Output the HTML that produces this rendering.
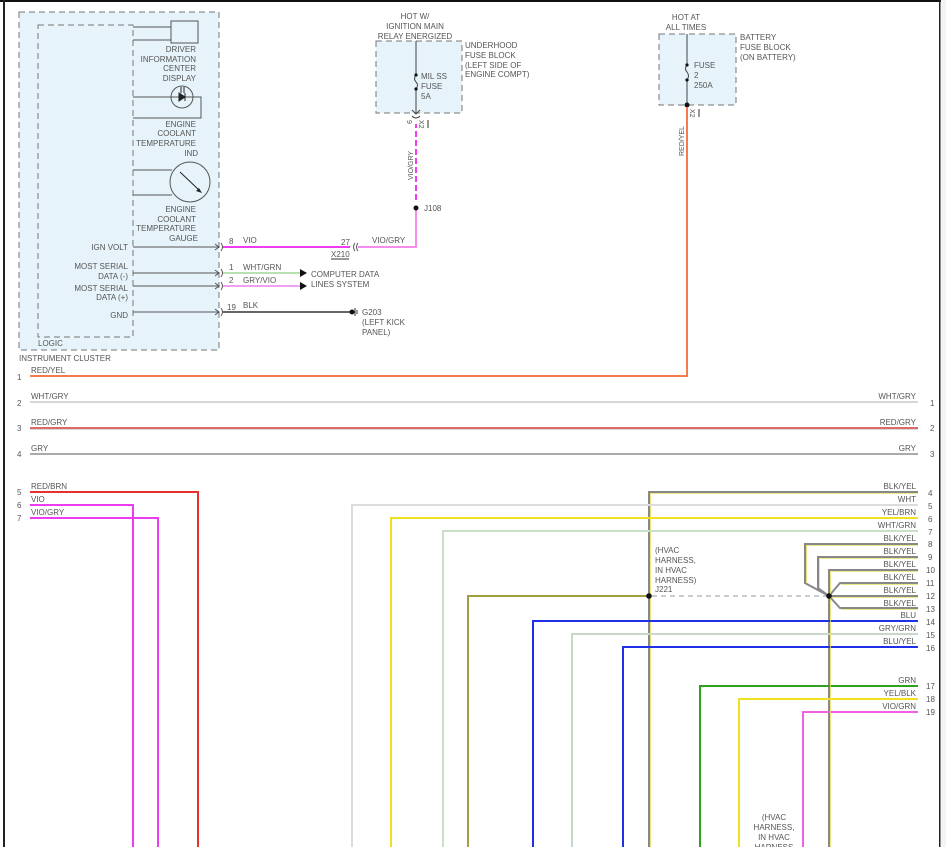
<!DOCTYPE html>
<html><head><meta charset="utf-8"><style>
html,body{margin:0;padding:0;background:#fff;width:946px;height:847px;overflow:hidden}
svg{display:block}
text{font-family:"Liberation Sans",sans-serif;font-size:8px;fill:#555}
.r{text-anchor:end}.m{text-anchor:middle}
</style></head><body>
<svg width="946" height="847" viewBox="0 0 946 847" xmlns="http://www.w3.org/2000/svg">
<rect x="0" y="0" width="946" height="2" fill="#111"/>
<rect x="3" y="0" width="2" height="847" fill="#222"/>
<rect x="939" y="0" width="1.5" height="847" fill="#222"/>
<rect x="941" y="0" width="5" height="847" fill="#f4f4f4"/>

<!-- instrument cluster -->
<rect x="19" y="12" width="200" height="338" fill="#e6f3fa" stroke="#777" stroke-dasharray="6,4"/>
<rect x="38" y="25" width="95" height="312" fill="none" stroke="#777" stroke-dasharray="6,4"/>
<rect x="171" y="21" width="27" height="22" fill="#e6f3fa" stroke="#555"/>
<path d="M133 27H171M133 40H171" stroke="#555" fill="none"/>
<text class="r" x="196" y="52">DRIVER</text><text class="r" x="196" y="62">INFORMATION</text><text class="r" x="196" y="71">CENTER</text><text class="r" x="196" y="81">DISPLAY</text>
<circle cx="182" cy="97" r="11" fill="none" stroke="#555"/>
<path d="M133 97H201V118H133" fill="none" stroke="#555"/>
<path d="M179 93L185 97L179 101ZM185 93V101M181 87V93M184 87V93" stroke="#222" fill="#222" stroke-width="1"/>
<text class="r" x="196" y="127">ENGINE</text><text class="r" x="196" y="136">COOLANT</text><text class="r" x="196" y="146">TEMPERATURE</text><text class="r" x="198" y="156">IND</text>
<circle cx="190" cy="182" r="20" fill="none" stroke="#555"/>
<path d="M133 170H172M133 195H172" stroke="#555" fill="none"/>
<path d="M180 172L200 191" stroke="#222"/><path d="M202 193L196 191L199 188Z" fill="#222"/>
<text class="r" x="196" y="212">ENGINE</text><text class="r" x="196" y="222">COOLANT</text><text class="r" x="196" y="231">TEMPERATURE</text><text class="r" x="198" y="241">GAUGE</text>
<text class="r" x="128" y="250">IGN VOLT</text>
<text class="r" x="128" y="269">MOST SERIAL</text><text class="r" x="128" y="279">DATA (-)</text>
<text class="r" x="128" y="291">MOST SERIAL</text><text class="r" x="128" y="300">DATA (+)</text>
<text class="r" x="128" y="318">GND</text>
<path d="M133 247H219M133 273H219M133 286H219M133 312H219" stroke="#555"/>
<path d="M215 244L219 247L215 250M215 270L219 273L215 276M215 283L219 286L215 289M215 309L219 312L215 315" stroke="#555" fill="none"/>
<path d="M221 243Q224 247 221 251M221 269Q224 273 221 277M221 282Q224 286 221 290M221 308Q224 312 221 316" stroke="#555" fill="none"/>
<text x="38" y="346">LOGIC</text>
<text x="19" y="361">INSTRUMENT CLUSTER</text>

<!-- wires out of cluster -->
<path d="M223 247H350" stroke="#f03cf0" stroke-width="2"/>
<path d="M358 247H416V208" stroke="#f58cf0" stroke-width="2" fill="none"/>
<path d="M416 200V124" stroke="#f03cf0" stroke-width="2" stroke-dasharray="6,3"/>
<circle cx="416" cy="208" r="2.5" fill="#111"/>
<text x="424" y="211">J108</text>
<path d="M355 243Q352 247 355 251M358 243Q355 247 358 251" stroke="#555" fill="none"/>
<text x="229" y="244">8</text><text x="243" y="243">VIO</text>
<text x="341" y="245">27</text><text x="331" y="257">X210</text><path d="M331 259H349" stroke="#333"/>
<text x="372" y="243">VIO/GRY</text>
<path d="M223 273H300" stroke="#b8e0b0" stroke-width="2"/>
<path d="M223 286H300" stroke="#f0a0f0" stroke-width="2"/>
<path d="M300 269L307 273L300 277ZM300 282L307 286L300 290Z" fill="#111"/>
<text x="229" y="270">1</text><text x="243" y="270">WHT/GRN</text>
<text x="229" y="283">2</text><text x="243" y="283">GRY/VIO</text>
<text x="311" y="277">COMPUTER DATA</text><text x="311" y="287">LINES SYSTEM</text>
<path d="M223 312H350" stroke="#333" stroke-width="1.5"/>
<circle cx="352" cy="312" r="2.5" fill="#111"/><path d="M355 308V316M357 310V314" stroke="#333"/>
<text x="227" y="310">19</text><text x="243" y="308">BLK</text>
<text x="362" y="315">G203</text><text x="362" y="325">(LEFT KICK</text><text x="362" y="335">PANEL)</text>

<!-- underhood fuse -->
<text class="m" x="415" y="19">HOT W/</text><text class="m" x="415" y="29">IGNITION MAIN</text><text class="m" x="415" y="39">RELAY ENERGIZED</text>
<rect x="376" y="41" width="86" height="72" fill="#e6f3fa" stroke="#777" stroke-dasharray="6,4"/>
<path d="M416 41V75M416 89V113" stroke="#444"/>
<path d="M416 75Q413 79 416 82Q419 85 416 89" stroke="#444" fill="none"/>
<circle cx="416" cy="75" r="1.6" fill="#111"/><circle cx="416" cy="89" r="1.6" fill="#111"/>
<text x="421" y="79">MIL SS</text><text x="421" y="89">FUSE</text><text x="421" y="99">5A</text>
<text x="465" y="48">UNDERHOOD</text><text x="465" y="58">FUSE BLOCK</text><text x="465" y="68">(LEFT SIDE OF</text><text x="465" y="77">ENGINE COMPT)</text>
<path d="M412 110L416 114L420 110M412 116Q416 120 420 116" stroke="#444" fill="none"/>
<text transform="translate(407,120) rotate(90)" style="font-size:7px">9</text>
<text transform="translate(419,120) rotate(90)" style="font-size:7px">X2</text>
<path d="M428 120V128" stroke="#333"/>
<text transform="translate(413,180) rotate(-90)" style="font-size:7px">VIO/GRY</text>

<!-- battery fuse -->
<text class="m" x="686" y="20">HOT AT</text><text class="m" x="686" y="30">ALL TIMES</text>
<rect x="659" y="34" width="77" height="71" fill="#e6f3fa" stroke="#777" stroke-dasharray="6,4"/>
<path d="M687 34V65M687 80V105" stroke="#444"/>
<path d="M687 65Q684 69 687 72Q690 76 687 80" stroke="#444" fill="none"/>
<circle cx="687" cy="65" r="1.6" fill="#111"/><circle cx="687" cy="80" r="1.6" fill="#111"/>
<text x="694" y="68">FUSE</text><text x="694" y="78">2</text><text x="694" y="88">250A</text>
<text x="740" y="40">BATTERY</text><text x="740" y="50">FUSE BLOCK</text><text x="740" y="60">(ON BATTERY)</text>
<circle cx="687" cy="105" r="2.5" fill="#111"/>
<text transform="translate(690,109) rotate(90)" style="font-size:7px">X2</text><path d="M699 109V117" stroke="#333"/>
<text transform="translate(684,156) rotate(-90)" style="font-size:7px">RED/YEL</text>
<path d="M687 107V376H30" stroke="#f47a50" stroke-width="2" fill="none"/>

<!-- left rows -->
<text x="31" y="373">RED/YEL</text><text x="17" y="380">1</text>
<path d="M30 402H918" stroke="#d6d6d6" stroke-width="2"/><text x="31" y="399">WHT/GRY</text><text x="17" y="406">2</text>
<text class="r" x="916" y="399">WHT/GRY</text><text x="930" y="406">1</text>
<path d="M30 428H918" stroke="#d03838" stroke-width="1.5"/><path d="M30 429.5H918" stroke="#ccc" stroke-width="0.8"/>
<text x="31" y="425">RED/GRY</text><text x="17" y="431">3</text><text class="r" x="916" y="425">RED/GRY</text><text x="930" y="431">2</text>
<path d="M30 454H918" stroke="#aaa" stroke-width="2"/><text x="31" y="451">GRY</text><text x="17" y="457">4</text>
<text class="r" x="916" y="451">GRY</text><text x="930" y="457">3</text>
<path d="M30 492H198V847" stroke="#e83030" stroke-width="2" fill="none"/>
<path d="M30 505H133V847" stroke="#f03cf0" stroke-width="2" fill="none"/>
<path d="M30 518H158V847" stroke="#f03cf0" stroke-width="2" fill="none"/>
<text x="31" y="489">RED/BRN</text><text x="17" y="495">5</text>
<text x="31" y="502">VIO</text><text x="17" y="508">6</text>
<text x="31" y="515">VIO/GRY</text><text x="17" y="521">7</text>

<!-- right rows -->
<g fill="none" stroke-width="2">
<path d="M918 492H649V847" stroke="#888"/><path d="M918 493.5H650.5V847" stroke="#e8e060" stroke-width="0.8"/>
<path d="M918 505H352V847" stroke="#dcdcdc"/>
<path d="M918 518H391V847" stroke="#f0e020"/>
<path d="M918 531H443V847" stroke="#c8e0c8"/>
<path d="M918 544H805V583L829 596" stroke="#888"/>
<path d="M918 557H818V588L829 596" stroke="#888"/>
<path d="M918 570H829V847" stroke="#888"/>
<path d="M918 583H840L829 596" stroke="#888"/>
<path d="M918 596H829" stroke="#888"/>
<path d="M918 608H840L829 596" stroke="#888"/>
<path d="M649 596H468V847" stroke="#a0a040"/>
<path d="M918 621H533V847" stroke="#2030e8"/>
<path d="M918 634H572V847" stroke="#c8d8c8"/>
<path d="M918 647H623V847" stroke="#2030e8"/>
<path d="M918 686H700V847" stroke="#30a020"/>
<path d="M918 699H739V847" stroke="#f0e020"/>
<path d="M918 712H803V847" stroke="#f060e0"/>
</g>
<g fill="none" stroke="#e8e060" stroke-width="0.8">
<path d="M918 545.5H806.5V583M918 558.5H819.5V588M918 571.5H830.5V847M918 584.5H841M918 597.5H830M918 609.5H841"/>
</g>
<path d="M652 596H826" stroke="#999" stroke-dasharray="5,4"/>
<circle cx="649" cy="596" r="2.8" fill="#111"/><circle cx="829" cy="596" r="2.8" fill="#111"/>
<text x="655" y="553">(HVAC</text><text x="655" y="563">HARNESS,</text><text x="655" y="573">IN HVAC</text><text x="655" y="583">HARNESS)</text><text x="655" y="592">J221</text>
<g class="r">
<text class="r" x="916" y="489">BLK/YEL</text><text class="r" x="916" y="502">WHT</text><text class="r" x="916" y="515">YEL/BRN</text><text class="r" x="916" y="528">WHT/GRN</text>
<text class="r" x="916" y="541">BLK/YEL</text><text class="r" x="916" y="554">BLK/YEL</text><text class="r" x="916" y="567">BLK/YEL</text><text class="r" x="916" y="580">BLK/YEL</text>
<text class="r" x="916" y="593">BLK/YEL</text><text class="r" x="916" y="606">BLK/YEL</text><text class="r" x="916" y="618">BLU</text><text class="r" x="916" y="631">GRY/GRN</text>
<text class="r" x="916" y="644">BLU/YEL</text><text class="r" x="916" y="683">GRN</text><text class="r" x="916" y="696">YEL/BLK</text><text class="r" x="916" y="709">VIO/GRN</text>
</g>
<text x="928" y="496">4</text><text x="928" y="509">5</text><text x="928" y="522">6</text><text x="928" y="535">7</text>
<text x="928" y="547">8</text><text x="928" y="560">9</text><text x="926" y="573">10</text><text x="926" y="586">11</text>
<text x="926" y="599">12</text><text x="926" y="612">13</text><text x="926" y="625">14</text><text x="926" y="638">15</text>
<text x="926" y="651">16</text><text x="926" y="689">17</text><text x="926" y="702">18</text><text x="926" y="715">19</text>
<text class="m" x="774" y="820">(HVAC</text><text class="m" x="774" y="830">HARNESS,</text><text class="m" x="774" y="840">IN HVAC</text><text class="m" x="774" y="850">HARNESS</text>
</svg>
</body></html>
